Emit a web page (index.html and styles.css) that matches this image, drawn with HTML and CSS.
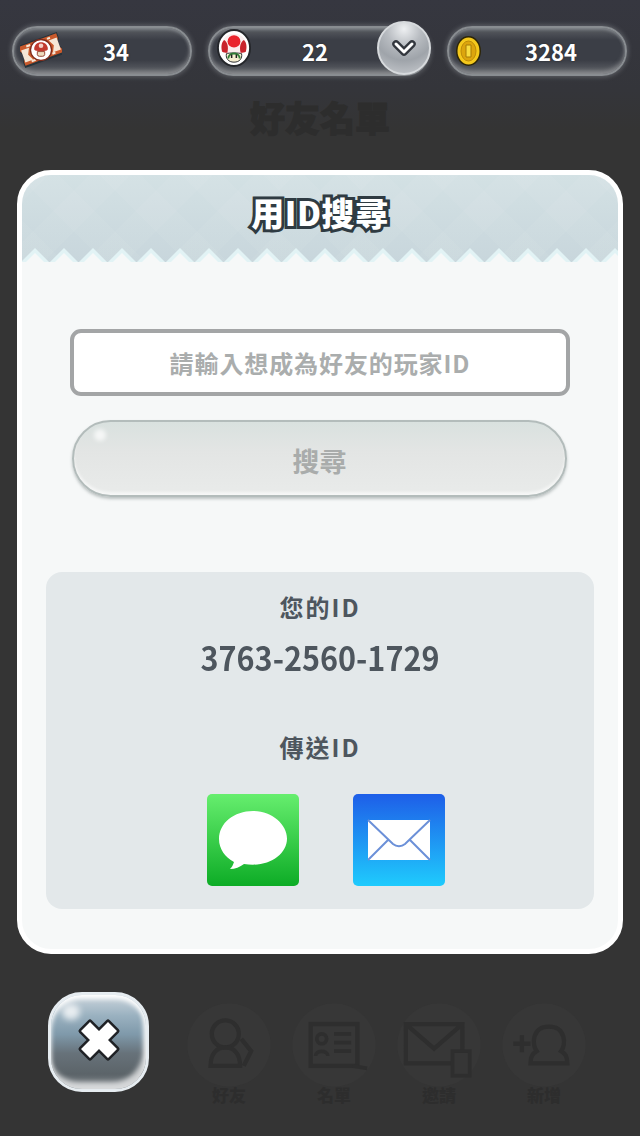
FILE: index.html
```html
<!DOCTYPE html>
<html lang="zh-Hant">
<head>
<meta charset="utf-8">
<title>用ID搜尋</title>
<link rel="stylesheet" href="styles.css">
</head>
<body>
<div class="app">
  <header class="topbar">
    <div class="pill pill-a">
      <svg class="pill-icon ticket" viewBox="0 0 40 40">
        <g transform="rotate(-20 20 20)">
          <path d="M0 9h40v6l-4 5 4 5v6H0v-6l4-5-4-5z" fill="#26333a"/>
          <path d="M1 10h38v5l-4 5 4 5v4H1v-4l4-5-4-5z" fill="#c9592b"/>
          <path d="M2 14h8l-3 6 3 6H2M38 14h-8l3 6-3 6h8" fill="#f6e7d6"/>
          <path d="M8 12h24M8 27h24" stroke="#f6e7d6" stroke-width="2" stroke-dasharray="4 3"/>
        </g>
        <circle cx="20" cy="20" r="10" fill="#fff" stroke="#7f2a1a" stroke-width="1.200"/>
        <path d="M13.500 19c0-4 3-6.500 6.500-6.500s6.500 2.500 6.500 6.500c0 1.500-2 2-6.500 2s-6.500-.5-6.500-2z" fill="#c23a2e"/>
        <circle cx="20" cy="16" r="2.200" fill="#f3d0c6"/>
        <path d="M16.500 21.500h7v3a2 2 0 0 1-2 1.500h-3a2 2 0 0 1-2-1.500z" fill="#ecdcc0" stroke="#8c2f1c" stroke-width=".8"/>
      </svg>
      <span class="pill-num">34</span>
    </div>
    <div class="pill pill-b">
      <svg class="pill-icon toad" viewBox="0 0 36 40">
        <ellipse cx="18" cy="20" rx="17" ry="19" fill="#fff" stroke="#24262a" stroke-width="2"/>
        <path d="M5 24C3 12 9 5 18 5s15 7 13 19c-3 2-7 3-13 3s-10-1-13-3z" fill="#fbeeee"/>
        <path d="M5.500 24C4 18 5 14 7.500 11.500c3.500 2 5 7 3.500 13.500-2 0-4-.2-5.500-1zM30.500 24c1.500-6 .5-10-2-12.500-3.500 2-5 7-3.500 13.500 2 0 4-.2 5.500-1z" fill="#c9232c"/>
        <ellipse cx="18" cy="13" rx="6.800" ry="6.500" fill="#e9242d"/>
        <path d="M10 26c2.500-1 13.500-1 16 0 1 5-2 9-8 9s-9-4-8-9z" fill="#f5eed0" stroke="#24262a" stroke-width="1"/>
        <path d="M12 31c0-7 12-7 12 0" fill="none" stroke="#2f7d35" stroke-width="2"/>
        <path d="M15.500 27v3.500M20.500 27v3.500" stroke="#222" stroke-width="1.600"/>
      </svg>
      <span class="pill-num">22</span>
      <button class="chevron-btn" type="button" aria-label="展開">
        <svg viewBox="0 0 24 18" class="chevron"><path d="M4 5l8 8 8-8" fill="none" stroke="#33373e" stroke-width="7.500" stroke-linecap="round" stroke-linejoin="round"/><path d="M4 5l8 8 8-8" fill="none" stroke="#fff" stroke-width="3" stroke-linecap="round" stroke-linejoin="round"/></svg>
      </button>
    </div>
    <div class="pill pill-c">
      <svg class="pill-icon coin" viewBox="0 0 26 32">
        <ellipse cx="13" cy="16" rx="12.500" ry="15" fill="#2d2608"/>
        <ellipse cx="13" cy="16" rx="11" ry="13.500" fill="#f4c81c"/>
        <ellipse cx="13" cy="16" rx="7.500" ry="10" fill="#dca50d" stroke="#bc8a0a"/>
        <path d="M10.500 10h5v12h-5z" fill="#f8dc40" stroke="#a67a08"/>
      </svg>
      <span class="pill-num">3284</span>
    </div>
  </header>

  <div class="behind-title">好友名單</div>

  <main class="card">
    <div class="card-head">
      <h1 class="card-title">用ID搜尋</h1>
    </div>
    <div class="card-body">
      <div class="search-input">請輸入想成為好友的玩家ID</div>
      <button class="search-btn" type="button">搜尋</button>
      <section class="info">
        <div class="info-label">您的ID</div>
        <div class="info-id">3763-2560-1729</div>
        <div class="info-label info-label-send">傳送ID</div>
        <div class="share">
          <svg class="share-icon" viewBox="0 0 92 92">
            <defs><linearGradient id="msgbg" x1="0" y1="0" x2="0" y2="1"><stop offset="0" stop-color="#66ee6e"/><stop offset="1" stop-color="#0dac26"/></linearGradient></defs>
            <rect width="92" height="92" rx="5" fill="url(#msgbg)"/>
            <path d="M46 17c-19 0-34 12-34 28 0 10 6 18 15 23-1 3-2 5-4 7 5 0 10-2 14-5 3 .5 6 .7 9 .7 19 0 34-12 34-26S65 17 46 17z" fill="#fff"/>
          </svg>
          <svg class="share-icon" viewBox="0 0 92 92">
            <defs><linearGradient id="mailbg" x1="0" y1="0" x2="0" y2="1"><stop offset="0" stop-color="#1e5ee8"/><stop offset="1" stop-color="#1fcbfd"/></linearGradient></defs>
            <rect width="92" height="92" rx="5" fill="url(#mailbg)"/>
            <rect x="15" y="26" width="62" height="40" fill="#fff"/>
            <path d="M15 26l25 24c3.500 3 8.500 3 12 0l25-24M15 66l20-20M77 66L57 46" fill="none" stroke="#6b90d8" stroke-width="2"/>
          </svg>
        </div>
      </section>
    </div>
  </main>

  <footer class="bottom">
    <button class="close-btn" type="button" aria-label="關閉">
      <svg viewBox="0 0 48 48" class="close-x"><path d="M6 15l9-9 9 9 9-9 9 9-9 9 9 9-9 9-9-9-9 9-9-9 9-9z" fill="#fff" stroke="#1f2125" stroke-width="5" stroke-linejoin="round" paint-order="stroke"/></svg>
    </button>
    <nav class="tabs">
      <div class="tab">
        <svg class="tab-icon" viewBox="0 0 70 70"><circle cx="35" cy="35" r="34" fill="#373737"/><circle cx="32" cy="26" r="11" fill="none" stroke="#2e2e2e" stroke-width="3.500"/><path d="M20 52c0-10 5-15 12-15s12 5 12 15zM45 30l8 10-6 12" fill="none" stroke="#2e2e2e" stroke-width="3.500"/></svg>
        <span class="tab-label">好友</span>
      </div>
      <div class="tab">
        <svg class="tab-icon" viewBox="0 0 70 70"><circle cx="35" cy="35" r="34" fill="#373737"/><rect x="16" y="18" width="38" height="34" fill="none" stroke="#2e2e2e" stroke-width="3.500"/><path d="M35 26h14M35 33h14M35 40h14M50 52l12 2" stroke="#2e2e2e" stroke-width="3"/><circle cx="25" cy="30" r="4" fill="none" stroke="#2e2e2e" stroke-width="3"/><path d="M20 44c0-5 10-5 10 0" fill="none" stroke="#2e2e2e" stroke-width="3"/></svg>
        <span class="tab-label">名單</span>
      </div>
      <div class="tab">
        <svg class="tab-icon" viewBox="0 0 70 70"><circle cx="35" cy="35" r="34" fill="#373737"/><path d="M8 18h46v32H8zM8 18l23 20 23-20" fill="none" stroke="#2e2e2e" stroke-width="3.500"/><rect x="46" y="40" width="14" height="20" fill="#363636" stroke="#2e2e2e" stroke-width="3"/></svg>
        <span class="tab-label">邀請</span>
      </div>
      <div class="tab">
        <svg class="tab-icon" viewBox="0 0 70 70"><circle cx="35" cy="35" r="34" fill="#373737"/><path d="M24 50c0-6 2-8 5-10-4-5-4-20 10-20s14 15 10 20c3 2 5 4 5 10z" fill="none" stroke="#2e2e2e" stroke-width="3.500"/><path d="M10 34h14M17 27v14" stroke="#2e2e2e" stroke-width="3.500"/></svg>
        <span class="tab-label">新增</span>
      </div>
    </nav>
  </footer>
</div>
</body>
</html>
```
FILE: styles.css
```css
* { box-sizing: border-box; }
html, body { margin: 0; padding: 0; }
body {
  width: 640px;
  height: 1136px;
  overflow: hidden;
  background: #343434;
  font-family: "Noto Sans CJK TC", "Noto Sans", sans-serif;
}
.app {
  display: flex;
  flex-direction: column;
  height: 1136px;
  background: linear-gradient(#363740 0, #34353a 90px, #343434 130px);
}
.topbar {
  display: flex;
  gap: 16px;
  padding: 26px 13px 0 12px;
  height: 76px;
}
.pill {
  position: relative;
  display: flex;
  align-items: center;
  flex: none;
  height: 50px;
  border-radius: 25px;
  background: linear-gradient(#5a5d63 0, #3b3e46 26%, #3b3e46 70%, #62656a 100%);
  border: 2px solid #898d91;
  box-shadow: 0 0 5px 1px rgba(200,205,210,.3), inset 0 2px 3px rgba(200,205,210,.35), inset 0 -3px 4px rgba(215,215,215,.35);
}
.pill-a { width: 180px; }
.pill-b { width: 222px; margin-right: 1px; }
.pill-c { width: 180px; }
.pill-icon { position: absolute; display: block; }
.ticket { left: 6px; top: 1px; width: 42px; height: 42px; }
.toad { left: 7px; top: 1px; width: 34px; height: 38px; }
.coin { left: 6px; top: 7px; width: 27px; height: 32px; }
.pill-num {
  flex: 1;
  text-align: center;
  color: #fff;
  font-size: 22px;
  font-weight: 700;
  line-height: 46px;
  text-shadow: 0 0 2px #23262b;
}
.pill-a .pill-num { margin-left: 28px; }
.pill-b .pill-num { padding-right: 8px; }
.pill-c .pill-num { margin-left: 32px; margin-right: 4px; }
.chevron-btn {
  position: absolute;
  right: -3px;
  top: -7px;
  width: 54px;
  height: 54px;
  padding: 0;
  border: 2px solid #d7dadd;
  border-radius: 50%;
  background: radial-gradient(circle at 50% 12%, #eef0f2 0, #b8bcc1 34%, #9fa4aa 62%, #c9ccd0 100%);
  display: flex;
  align-items: center;
  justify-content: center;
}
.chevron { width: 24px; height: 18px; display: block; }

.behind-title {
  height: 94px;
  padding-top: 19px;
  text-align: center;
  font-size: 35px;
  font-weight: 900;
  line-height: 44px;
  color: #2d2d2d;
  -webkit-text-stroke: 1px #2d2d2d;
}

.card {
  margin: 0 17px;
  height: 784px;
  flex: none;
  border: 5px solid #fff;
  border-radius: 34px;
  background: #f6f8f8;
  overflow: hidden;
  display: flex;
  flex-direction: column;
}
.card-head {
  height: 87px;
  flex: none;
  display: flex;
  justify-content: center;
  padding-top: 15px;
  background:
    conic-gradient(from 134deg at 50% 0, #f6f8f8 0 92deg, transparent 0) -1.5px calc(100% + 5px) / 29px 14px repeat-x,
    conic-gradient(from 134deg at 50% 0, #e2f3f5 0 92deg, transparent 0) -1.5px 100% / 29px 14px repeat-x,
    repeating-linear-gradient(45deg, rgba(255,255,255,.045) 0 29px, transparent 29px 58px),
    repeating-linear-gradient(-45deg, rgba(255,255,255,.045) 0 29px, transparent 29px 58px),
    linear-gradient(#d3e1e4, #c8d6dc);
}
.card-title {
  margin: 0;
  font-size: 33px;
  font-weight: 900;
  line-height: 44px;
  letter-spacing: .6px;
  color: #fff;
  paint-order: stroke fill;
  -webkit-text-stroke: 6px #2f3b42;
}
.card-body {
  flex: 1;
  padding: 67px 24px 40px;
  display: flex;
  flex-direction: column;
}
.search-input {
  width: 500px;
  height: 67px;
  margin-left: 24px;
  border: 4px solid #a3a5a6;
  border-radius: 11px;
  background: #fff;
  color: #aaadad;
  font-size: 24px;
  font-weight: 700;
  line-height: 59px;
  letter-spacing: .9px;
  text-align: center;
  flex: none;
}
.search-btn {
  position: relative;
  width: 495px;
  height: 77px;
  margin: 24px 0 0 26px;
  flex: none;
  padding: 4px 0 0;
  border: 2px solid #b3bcbb;
  border-radius: 39px;
  background: linear-gradient(#d9e1df 0, #e3e5e4 40%, #e9ebea 100%);
  box-shadow: 0 2px 3px rgba(120,130,130,.45), inset 0 -3px 3px rgba(255,255,255,.6);
  color: #a9acab;
  font-family: inherit;
  font-size: 27px;
  font-weight: 700;
}
.search-btn::before {
  content: "";
  position: absolute;
  left: 20px;
  top: 7px;
  width: 12px;
  height: 12px;
  border-radius: 50%;
  background: rgba(255,255,255,.7);
  filter: blur(2px);
}
.info {
  margin-top: 75px;
  height: 337px;
  flex: none;
  border-radius: 16px;
  background: #e3e8ea;
  padding-top: 18px;
  color: #4e565e;
  text-align: center;
  display: flex;
  flex-direction: column;
}
.info-label {
  font-size: 24px;
  font-weight: 700;
  line-height: 34px;
  letter-spacing: 2px;
}
.info-id {
  font-size: 33px;
  font-weight: 700;
  line-height: 48px;
  margin-top: 9px;
  transform: scaleX(.926);
}
.info-label-send { margin-top: 49px; }
.share {
  display: flex;
  justify-content: center;
  gap: 54px;
  margin-top: 30px;
  padding-left: 11px;
}
.share-icon { width: 92px; height: 92px; display: block; flex: none; }

.bottom {
  display: flex;
  padding: 38px 0 0 48px;
  align-items: flex-start;
}
.close-btn {
  position: relative;
  width: 101px;
  height: 100px;
  flex: none;
  padding: 0 0 4px;
  border: 3px solid #e6ecf0;
  border-radius: 34px;
  background: linear-gradient(#cbd5dc 0, #9ab1c0 22%, #7f99aa 42%, #67727a 62%, #5c6469 84%, #7b8287 100%);
  box-shadow: inset 0 4px 5px #fff, inset -3px -7px 5px rgba(255,255,255,.7);
  display: flex;
  align-items: center;
  justify-content: center;
}
.close-btn::before {
  content: "";
  position: absolute;
  left: 11px;
  top: 9px;
  width: 18px;
  height: 16px;
  border-radius: 50%;
  background: rgba(255,255,255,.75);
  filter: blur(3px);
}
.close-x { width: 48px; height: 48px; display: block; position: relative; }
.tabs {
  display: flex;
  gap: 35px;
  margin: 10px 0 0 45px;
}
.tab {
  width: 70px;
  display: flex;
  flex-direction: column;
  align-items: center;
}
.tab-icon { width: 86px; height: 86px; flex: none; display: block; }
.tab-label {
  font-size: 17px;
  font-weight: 900;
  line-height: 20px;
  color: #2d2d2d;
  margin-top: -3px;
  white-space: nowrap;
}
```
